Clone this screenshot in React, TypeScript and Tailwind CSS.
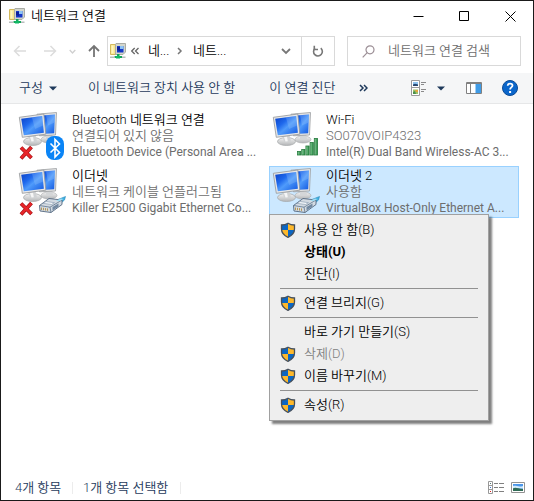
import React from "react";

const FONT = "font-['Roboto','Noto_Sans_CJK_KR',sans-serif]";

function NetworkFolderIcon() {
  return (
    <svg width="16" height="16" viewBox="0 0 16 16" aria-hidden="true" className="shrink-0">
      <path d="M.5 1.500h8v10h-8z" fill="#f7e58c" stroke="#d3b95c" />
      <path d="M1.500 2.500h2v8h-2z" fill="#fff6c0" />
      <path d="M6 .5h9.500v8.500L13 11.500H5.500V1.500z" fill="#d3d6cd" stroke="#a9aba4" />
      <path d="M7 3h6.500v6.500H7z" fill="#1638c8" />
      <path d="M10 3h3.500v3H10z" fill="#8cc3f4" />
      <path d="M7 4l3 0 0 4-3-1z" fill="#0c1f9a" />
      <path d="M7 11h2.500v2H12v2H4.500v-2H7z" fill="#13a55a" />
      <path d="M0 13.500h4.500v1.500H0zM12 13.500h3.500v1.500H12z" fill="#b8bcbc" />
      <path d="M6 13h4v2.500H6z" fill="#10b865" />
    </svg>
  );
}

function Shield() {
  return (
    <svg width="16" height="16" viewBox="0 0 16 16" aria-hidden="true">
      <defs>
        <clipPath id="shieldShape">
          <path d="M8 1.200C6 2.500 4 3 1.500 3v4c0 4 2.500 6.500 6.500 8.300C12 13.500 14.500 11 14.500 7V3C12 3 10 2.500 8 1.200z" />
        </clipPath>
      </defs>
      <g clipPath="url(#shieldShape)">
        <path d="M0 0h8v8H0z" fill="#0b66c3" />
        <path d="M8 0h8v8H8z" fill="#fdb82b" />
        <path d="M0 8h8v8H0z" fill="#fdb82b" />
        <path d="M8 8h8v8H8z" fill="#0b66c3" />
      </g>
      <path
        d="M8 1.200C6 2.500 4 3 1.500 3v4c0 4 2.500 6.500 6.500 8.300C12 13.500 14.500 11 14.500 7V3C12 3 10 2.500 8 1.200z"
        fill="none"
        stroke="#46505c"
        strokeWidth="1.300"
      />
    </svg>
  );
}

type Badge = "bluetooth" | "wifi" | "plug";

function AdapterIcon({ badge, off }: { badge: Badge; off?: boolean }) {
  return (
    <svg width="48" height="50" viewBox="0 0 48 50" aria-hidden="true" className="shrink-0">
      <defs>
        <linearGradient id="screen" x1="0" y1="0" x2="1" y2="1">
          <stop offset="0" stopColor="#0a3fc4" />
          <stop offset=".35" stopColor="#1e68ec" />
          <stop offset=".55" stopColor="#4f9bfb" />
          <stop offset="1" stopColor="#1157e0" />
        </linearGradient>
        <linearGradient id="stand" x1="0" y1="0" x2="0" y2="1">
          <stop offset="0" stopColor="#f4f4f4" />
          <stop offset="1" stopColor="#b4b6b8" />
        </linearGradient>
        <linearGradient id="bar" x1="0" y1="0" x2="1" y2="0">
          <stop offset="0" stopColor="#8fd0a0" />
          <stop offset="1" stopColor="#23873f" />
        </linearGradient>
      </defs>
      <ellipse cx="31" cy="28.500" rx="8" ry="3.500" fill="url(#stand)" stroke="#a9abad" strokeWidth=".6" />
      <path d="M28 22h6l1 6h-7z" fill="#d4d6d8" />
      <path d="M19 3.200l19.500-1.700L37.500 24l-16 .8z" fill="#e3e4e5" stroke="#9b9da0" strokeWidth=".8" />
      <path d="M21 4.800l16-1.400-.8 18.800-13 .8z" fill="url(#screen)" />
      <path d="M28 4.200l9-.8-.4 8-6.600 3z" fill="#9cc8fd" opacity=".3" />
      <ellipse cx="14.500" cy="30.500" rx="9" ry="4" fill="url(#stand)" stroke="#a4a6a8" strokeWidth=".7" />
      <path d="M10.500 25l7-1 1.500 6.500c-2 1-5 1-7 .2z" fill="#d0d2d4" />
      <path d="M12 26l3-.4.8 4.700-2.300.2z" fill="#f6f6f6" />
      <path d="M1.300 6.300L25.800 3l2 20.200L4.300 26.300z" fill="#e6e7e8" stroke="#939598" strokeWidth=".8" />
      <path d="M3.200 7.800l21-2.900 1.700 16.900L5.800 24.300z" fill="url(#screen)" />
      <path d="M14 6.400l10.200-1.500.9 9.500-8.100 3.500z" fill="#a6cffd" opacity=".25" />
      {badge === "bluetooth" && (
        <g>
          <rect x="28" y="25" width="18" height="24" rx="8" fill="#0a84f6" />
          <path d="M32.500 32.500l9 9L37 46V28.500l4.500 4.500-9 8.500" fill="none" stroke="#fff" strokeWidth="1.600" />
        </g>
      )}
      {badge === "wifi" && (
        <g stroke="#257a3c" strokeWidth=".8" fill="url(#bar)">
          <rect x="25.500" y="40.500" width="3.200" height="3.500" />
          <rect x="29.700" y="38.500" width="3.200" height="5.500" />
          <rect x="33.900" y="35" width="3.200" height="9" />
          <rect x="38.100" y="31.500" width="3.200" height="12.500" />
          <rect x="42.300" y="27.500" width="3.200" height="16.500" />
        </g>
      )}
      {badge === "plug" && (
        <g strokeLinejoin="round">
          <path d="M36 34l11.500-4.500-1 3.500-5 4.500z" fill="#3fb0e2" stroke="#2c89ba" strokeWidth=".6" />
          <path d="M21.500 38.500L31 31.500l13 1.500v4.500L33 45.500l-11-1.500z" fill="#d3dae2" stroke="#54687f" strokeWidth=".9" />
          <path d="M21.500 38.500l10.500 1.700 12-7.200M32 40.200l1 5.300" fill="none" stroke="#5d738b" strokeWidth=".8" />
          <path d="M25 36.300l8.500 1.200 3-1.800-8.500-1.200z" fill="#f4f7fa" stroke="#8196ab" strokeWidth=".6" />
          <path d="M34.500 40l6-3.500v3l-6 4z" fill="#7188a1" />
          <path d="M23.500 40.500v2.500M25.500 40.800v2.500M27.500 41.100v2.500M29.500 41.400v2.500" stroke="#b0904a" strokeWidth=".9" />
          <path d="M38 33.500l5-2 2.500.5-4 2.300z" fill="#9fdcf3" />
        </g>
      )}
      {off && (
        <g>
          <path d="M3 36.500l10.500 10.500M13.500 36L3 47.500" stroke="#9f0f12" strokeWidth="3.800" />
          <path d="M3.200 36.700l10 10M13.300 36.300L3.200 47.200" stroke="#e8262a" strokeWidth="2.500" />
        </g>
      )}
    </svg>
  );
}

interface Adapter {
  name: string;
  status: string;
  device: string;
  badge: Badge;
  off?: boolean;
  selected?: boolean;
}

const adapters: Adapter[] = [
  { name: "Bluetooth 네트워크 연결", status: "연결되어 있지 않음", device: "Bluetooth Device (Personal Area ...", badge: "bluetooth", off: true },
  { name: "Wi-Fi", status: "SO070VOIP4323", device: "Intel(R) Dual Band Wireless-AC 3...", badge: "wifi" },
  { name: "이더넷", status: "네트워크 케이블 언플러그됨", device: "Killer E2500 Gigabit Ethernet Co...", badge: "plug", off: true },
  { name: "이더넷 2", status: "사용함", device: "VirtualBox Host-Only Ethernet A...", badge: "plug", selected: true },
];

interface Entry {
  label: string;
  shield?: boolean;
  bold?: boolean;
  disabled?: boolean;
}

const menuGroups: Entry[][] = [
  [{ label: "사용 안 함(B)", shield: true }, { label: "상태(U)", bold: true }, { label: "진단(I)" }],
  [{ label: "연결 브리지(G)", shield: true }],
  [{ label: "바로 가기 만들기(S)" }, { label: "삭제(D)", shield: true, disabled: true }, { label: "이름 바꾸기(M)", shield: true }],
  [{ label: "속성(R)", shield: true }],
];

function ContextMenu() {
  return (
    <div
      role="menu"
      className="absolute top-[47px] -left-px z-10 w-[220px] border border-[#a0a0a0] bg-[#eeeeee] py-1 text-[13px] text-black shadow-[3px_3px_2px_rgba(0,0,0,0.5)]"
    >
      {menuGroups.map((group, i) => (
        <div key={i} role="group">
          {i > 0 && <hr className="mx-2.5 my-[3px] border-t border-[#919191]" />}
          {group.map((item) => (
            <button
              key={item.label}
              type="button"
              role="menuitem"
              disabled={item.disabled}
              className={`flex h-[22px] w-full items-center gap-2 pl-2.5 text-left ${item.bold ? "font-bold" : ""} ${
                item.disabled ? "text-[#808080]" : ""
              }`}
            >
              <span className="w-4">{item.shield && <Shield />}</span>
              {item.label}
            </button>
          ))}
        </div>
      ))}
    </div>
  );
}

function AdapterTile({ adapter }: { adapter: Adapter }) {
  return (
    <li
      className={`relative flex h-[52px] items-center border pl-[2px] ${
        adapter.selected ? "border-[#99d1ff] bg-[#cce8ff]" : "border-transparent"
      }`}
    >
      <AdapterIcon badge={adapter.badge} off={adapter.off} />
      <div className="ml-[6px] min-w-0 flex-1 text-[#6d6d6d]">
        <p className="truncate text-[13px] leading-4 text-black">{adapter.name}</p>
        <p className="truncate text-[13px] leading-4">{adapter.status}</p>
        <p className="text-[12px] leading-4 font-normal whitespace-nowrap">{adapter.device}</p>
      </div>
      {adapter.selected && <ContextMenu />}
    </li>
  );
}

function Caret() {
  return (
    <svg width="8" height="5" viewBox="0 0 8 5" aria-hidden="true">
      <path d="M0 .5h8L4 4.500z" fill="#1e395b" />
    </svg>
  );
}

function ChevronDown({ size, color, width }: { size: number; color: string; width: number }) {
  return (
    <svg width={size} height={size} viewBox="0 0 10 10" fill="none" stroke={color} strokeWidth={width} aria-hidden="true">
      <path d="M1 3l4 4 4-4" />
    </svg>
  );
}

function Arrow({ d, color, width }: { d: string; color: string; width: number }) {
  return (
    <svg width="14" height="14" viewBox="0 0 14 14" fill="none" stroke={color} strokeWidth={width} aria-hidden="true">
      <path d={d} />
    </svg>
  );
}

function TitleBar() {
  return (
    <header className="flex h-[30px] items-center pl-2">
      <NetworkFolderIcon />
      <h1 className="ml-[6px] flex-1 text-[13px] text-black">네트워크 연결</h1>
      <button type="button" aria-label="최소화" className="flex h-full w-[46px] items-center justify-center">
        <svg width="11" height="11" viewBox="0 0 11 11">
          <path d="M.5 5.500h10" stroke="#000" />
        </svg>
      </button>
      <button type="button" aria-label="최대화" className="flex h-full w-[46px] items-center justify-center">
        <svg width="10" height="10" viewBox="0 0 10 10">
          <path d="M.5.500h9v9H.5z" fill="none" stroke="#000" />
        </svg>
      </button>
      <button type="button" aria-label="닫기" className="flex h-full w-[46px] items-center justify-center">
        <svg width="11" height="11" viewBox="0 0 11 11">
          <path d="M.5.500l10 10M10.500.500l-10 10" stroke="#000" />
        </svg>
      </button>
    </header>
  );
}

function NavigationRow() {
  return (
    <nav className="flex h-[42px] items-center px-3 pb-[2px] text-[13px]">
      <button type="button" aria-label="뒤로" disabled>
        <Arrow d="M13 7H1.500M6.500 2l-5 5 5 5" color="#dcdcdc" width={1.5} />
      </button>
      <button type="button" aria-label="앞으로" disabled className="ml-4">
        <Arrow d="M1 7h11.500M7.500 2l5 5-5 5" color="#dcdcdc" width={1.5} />
      </button>
      <button type="button" aria-label="최근 위치" disabled className="ml-3">
        <ChevronDown size={7} color="#d0d0d0" width={2} />
      </button>
      <button type="button" aria-label="위로" className="ml-[11px]">
        <Arrow d="M7 13V2M2 7l5-5 5 5" color="#747474" width={1.8} />
      </button>
      <div className="ml-[6px] flex h-[30px] flex-1 items-center border border-[#d9d9d9] pl-[2px]">
        <NetworkFolderIcon />
        <svg width="8" height="8" viewBox="0 0 8 8" fill="none" stroke="#666" strokeWidth="1.300" aria-hidden="true" className="ml-[5px]">
          <path d="M3.700 1l-3 3 3 3M7.500 1l-3 3 3 3" />
        </svg>
        <button type="button" className="ml-[9px] w-[29px] text-left">네...</button>
        <svg width="6" height="8" viewBox="0 0 6 8" fill="none" stroke="#777" strokeWidth="1.500" aria-hidden="true">
          <path d="M1 1l3 3-3 3" />
        </svg>
        <button type="button" className="ml-[10px] flex-1 text-left">네트...</button>
        <button type="button" aria-label="이전 위치" className="flex h-full w-[30px] items-center justify-center">
          <ChevronDown size={10} color="#777" width={1.8} />
        </button>
        <button type="button" aria-label="새로 고침" className="flex h-full w-[33px] items-center justify-center border-l border-[#d9d9d9]">
          <svg width="12" height="12" viewBox="0 0 12 12" fill="none" stroke="#777" strokeWidth="1.600" aria-hidden="true">
            <path d="M8.800 3.200A4.400 4.400 0 1 1 3 3.300" />
            <path d="M2.300.800v3.700H6" />
          </svg>
        </button>
      </div>
      <label className="ml-3 flex h-[30px] w-[174px] items-center border border-[#d9d9d9] pl-[14px]">
        <svg width="13" height="13" viewBox="0 0 13 13" fill="none" stroke="#9c8f96" strokeWidth="1.200" aria-hidden="true" className="shrink-0">
          <circle cx="8" cy="4.800" r="4" />
          <path d="M5.200 7.700L.7 12.300" />
        </svg>
        <input
          type="text"
          aria-label="네트워크 연결 검색"
          placeholder="네트워크 연결 검색"
          className="ml-[13px] w-full min-w-0 bg-transparent outline-none placeholder:text-[#6d6d6d]"
        />
      </label>
    </nav>
  );
}

function CommandBar() {
  return (
    <div className="flex h-[31px] items-center border-b border-[#e6e7e8] bg-[#f5f6f7] pr-[15px] pl-[18px] text-[13px] whitespace-nowrap text-[#1e395b]">
      <button type="button" className="flex items-center gap-[6px]">
        구성
        <Caret />
      </button>
      <button type="button" className="ml-[31px]">이 네트워크 장치 사용 안 함</button>
      <button type="button" className="ml-[34px]">이 연결 진단</button>
      <button type="button" aria-label="추가 명령" className="ml-[24px]">
        <svg width="9" height="8" viewBox="0 0 9 8" fill="none" stroke="#1e395b" strokeWidth="1.500">
          <path d="M1 1l3 3-3 3M5 1l3 3-3 3" />
        </svg>
      </button>
      <button type="button" aria-label="보기 변경" className="ml-auto flex items-center gap-[11px]">
        <svg width="15" height="16" viewBox="0 0 15 16">
          <path d="M.5.500h8v15h-8zM.5 7.500h8" fill="#fff" stroke="#9a9a9a" />
          <path d="M2 2h5v4H2z" fill="#8fc4f0" />
          <path d="M2 4.500L4 3.800l3 .7V6H2z" fill="#27466f" />
          <path d="M2 9.500h5v4.500H2z" fill="#9cc268" />
          <path d="M4 10h3v2H5z" fill="#e6a53e" />
          <path d="M2 12l2-1 1 3H2z" fill="#4c8f4c" />
          <path d="M10 2.500h5M10 4.500h3M10 9.500h5M10 11.500h3" stroke="#8a8a8a" />
        </svg>
        <Caret />
      </button>
      <button type="button" aria-label="미리 보기 창" className="ml-[21px]">
        <svg width="16" height="12" viewBox="0 0 16 12">
          <path d="M.5.500h15v11H.5z" fill="#fff" stroke="#808080" />
          <path d="M1 1.500h14M4.500 1v10" stroke="#808080" />
          <path d="M9.500 2h5.500v9H9.500z" fill="#3f9be6" />
        </svg>
      </button>
      <button type="button" aria-label="도움말" className="ml-5">
        <svg width="16" height="16" viewBox="0 0 16 16">
          <circle cx="8" cy="8" r="7.500" fill="#0a66cb" stroke="#0b4a94" />
          <path d="M5.700 5.800c0-3 4.800-2.900 4.800-.2 0 1.800-2.400 1.800-2.400 3.800" fill="none" stroke="#fff" strokeWidth="1.800" />
          <path d="M7.100 10.900h2v2h-2z" fill="#fff" />
        </svg>
      </button>
    </div>
  );
}

function StatusBar() {
  return (
    <footer className="flex h-[25px] items-center pr-2 pl-[14px] text-[13px] text-[#1e395b]">
      <span className="w-[57px]">4개 항목</span>
      <span className="h-3 border-l border-[#ececec]" />
      <span className="ml-[10px] w-[97px]">1개 항목 선택함</span>
      <span className="h-3 border-l border-[#ececec]" />
      <button type="button" aria-label="자세히" className="ml-auto">
        <svg width="16" height="13" viewBox="0 0 16 13">
          <path d="M.5.500h4v12h-4zM.5 4.500h4M.5 8.500h4" fill="#fff" stroke="#989898" />
          <path d="M2 2h1v1H2z" fill="#577" />
          <path d="M2 6h1v1H2z" fill="#3c74d8" />
          <path d="M2 10h1v1H2z" fill="#e02020" />
          <path d="M6 2.500h4M11 2.500h5M6 6.500h4M11 6.500h5M6 10.500h4M11 10.500h5" stroke="#808080" />
        </svg>
      </button>
      <button type="button" aria-label="큰 아이콘" className="ml-[7px]">
        <svg width="14" height="11" viewBox="0 0 14 11">
          <path d="M.5.500h13v10H.5z" fill="#fff" stroke="#929292" />
          <path d="M2 2h10v7H2z" fill="#4c97ea" />
          <path d="M2 4c3-1 5 1.500 10 0v2.500H2z" fill="#d4ecfb" />
          <path d="M2 6.500c2-2 5 0 10 .5v2H2z" fill="#2f6b55" />
        </svg>
      </button>
    </footer>
  );
}

export default function App() {
  return (
    <div className={`${FONT} flex min-h-screen flex-col border border-[#1a1a1a] bg-white font-[350]`}>
      <TitleBar />
      <NavigationRow />
      <CommandBar />
      <main className="flex-1 px-[14px] pt-[6px]">
        <ul className="grid grid-cols-[repeat(auto-fill,250px)] gap-1">
          {adapters.map((adapter) => (
            <AdapterTile key={adapter.name} adapter={adapter} />
          ))}
        </ul>
      </main>
      <StatusBar />
    </div>
  );
}
